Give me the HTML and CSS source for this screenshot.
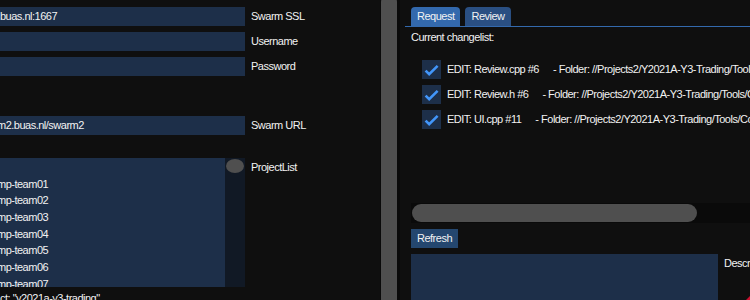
FILE: index.html
```html
<!DOCTYPE html>
<html>
<head>
<meta charset="utf-8">
<link rel="stylesheet" href="styles.css">
</head>
<body>
<div class="app">
  <div class="left">
    <div class="row"><div class="field">buas.nl:1667</div><div class="label">Swarm SSL</div></div>
    <div class="row"><div class="field"></div><div class="label">Username</div></div>
    <div class="row"><div class="field"></div><div class="label">Password</div></div>
    <div class="row url"><div class="field cut">m2.buas.nl/swarm2</div><div class="label">Swarm URL</div></div>
    <div class="listrow">
      <div class="listbox">
        <div class="items">
          <div class="item">mp-team01</div>
          <div class="item">mp-team02</div>
          <div class="item">mp-team03</div>
          <div class="item">mp-team04</div>
          <div class="item">mp-team05</div>
          <div class="item">mp-team06</div>
          <div class="item">mp-team07</div>
        </div>
        <div class="vscroll"><div class="vgrab"></div></div>
      </div>
      <div class="label listlabel">ProjectList</div>
    </div>
    <div class="selected">ct: "y2021a-y3-trading"</div>
  </div>
  <div class="divider"><div class="divgrab"></div></div>
  <div class="right">
    <div class="tabbar">
      <div class="tab active">Request</div>
      <div class="tab">Review</div>
    </div>
    <div class="heading">Current changelist:</div>
    <div class="changes">
      <div class="cl">
        <div class="cb"><svg viewBox="0 0 19 19" width="19" height="19"><path d="M3.6 10.6 L7.2 14.2 L15.6 5.8" fill="none" stroke="#4296fa" stroke-width="2.6"/></svg></div>
        <div class="cltext"><span>EDIT: Review.cpp #6</span><span class="folder">- Folder: //Projects2/Y2021A-Y3-Trading/Tools/CodeReview/Source</span></div>
      </div>
      <div class="cl">
        <div class="cb"><svg viewBox="0 0 19 19" width="19" height="19"><path d="M3.6 10.6 L7.2 14.2 L15.6 5.8" fill="none" stroke="#4296fa" stroke-width="2.6"/></svg></div>
        <div class="cltext"><span>EDIT: Review.h #6</span><span class="folder">- Folder: //Projects2/Y2021A-Y3-Trading/Tools/CodeReview/Source</span></div>
      </div>
      <div class="cl">
        <div class="cb"><svg viewBox="0 0 19 19" width="19" height="19"><path d="M3.6 10.6 L7.2 14.2 L15.6 5.8" fill="none" stroke="#4296fa" stroke-width="2.6"/></svg></div>
        <div class="cltext"><span>EDIT: UI.cpp #11</span><span class="folder">- Folder: //Projects2/Y2021A-Y3-Trading/Tools/CodeReview/Source</span></div>
      </div>
    </div>
    <div class="hscroll"><div class="hgrab"></div></div>
    <div class="btn">Refresh</div>
    <div class="descrow">
      <div class="descbox"></div>
      <div class="label desclabel">Description</div>
    </div>
  </div>
</div>
<div class="grip"></div>
</body>
</html>
```
FILE: styles.css
```css
* { box-sizing: border-box; }
html, body { margin: 0; padding: 0; }
body {
  width: 750px;
  height: 300px;
  overflow: hidden;
  position: relative;
  background: #0f0f0f;
  color: #f2f2f2;
  font: 11px/13px "Liberation Sans", Arial, sans-serif;
  letter-spacing: -0.5px;
}
.app { display: flex; height: 300px; }

.left { width: 380px; flex: none; padding-top: 7px; overflow: hidden; display: flex; flex-direction: column; }
.row { display: flex; align-items: center; gap: 6px; height: 19px; margin-bottom: 6px; flex: none; }
.field {
  width: 245px; height: 19px; flex: none;
  background: #1d2f49;
  line-height: 19px;
  white-space: nowrap; overflow: hidden;
}
.field.cut { text-indent: -3px; }
.label { white-space: nowrap; }
.row.url { margin-top: 34px; }
.listrow { display: flex; gap: 6px; align-items: flex-start; margin-top: 17px; flex: none; }
.listbox { width: 245px; height: 129px; flex: none; display: flex; background: #1d2f49; }
.items { flex: 1; padding-top: 17.6px; overflow: hidden; }
.item { height: 16.7px; line-height: 16.7px; white-space: nowrap; text-indent: -3px; }
.vscroll { width: 20px; flex: none; background: #111925; padding: 1px; }
.vgrab { width: 18px; height: 14px; border-radius: 9px / 7px; background: #4f4f4f; }
.listlabel { margin-top: 3px; }
.selected { margin-top: 5px; white-space: nowrap; flex: none; }

.divider { width: 20px; flex: none; background: #0a0a0a; padding-left: 1px; overflow: hidden; }
.divgrab { width: 16px; height: 330px; margin-top: -6px; border-radius: 8px; background: #4f4f4f; }

.right { flex: 1; min-width: 0; margin-left: 5px; overflow: hidden; display: flex; flex-direction: column; }
.tabbar { display: flex; gap: 5px; padding: 7px 0 0 6px; border-bottom: 1px solid #3369ad; flex: none; }
.tab {
  height: 19px; line-height: 19px; padding: 0 6px;
  border-radius: 4px 4px 0 0;
  background: #2a4f82;
  white-space: nowrap;
}
.tab.active { background: #3369ad; }
.heading { margin: 4px 0 0 6px; white-space: nowrap; flex: none; }

.changes { margin-top: 16px; padding-left: 17px; flex: none; }
.cl { display: flex; align-items: center; gap: 6px; height: 19px; margin-bottom: 6px; }
.cb { width: 19px; height: 19px; flex: none; background: #1d2f49; }
.cb svg { display: block; }
.cltext { white-space: nowrap; }
.folder { margin-left: 14px; }

.hscroll { height: 20px; margin: 68px 0 0 6px; background: #0a0a0a; padding: 1px; flex: none; }
.hgrab { width: 285px; height: 18px; border-radius: 9px; background: #4f4f4f; }

.btn {
  align-self: flex-start; flex: none;
  margin: 6px 0 0 6px;
  height: 19px; line-height: 19px; padding: 0 6px;
  background: #24476f; white-space: nowrap;
}
.descrow { display: flex; gap: 6px; margin: 6px 0 0 6px; align-items: flex-start; flex: none; }
.descbox { width: 307px; height: 60px; flex: none; background: #1d2f49; }
.desclabel { margin-top: 3px; }

.grip {
  position: absolute; right: 0; bottom: 0;
  width: 0; height: 0;
  border-left: 4px solid transparent;
  border-bottom: 4px solid #c8102e;
}
```
